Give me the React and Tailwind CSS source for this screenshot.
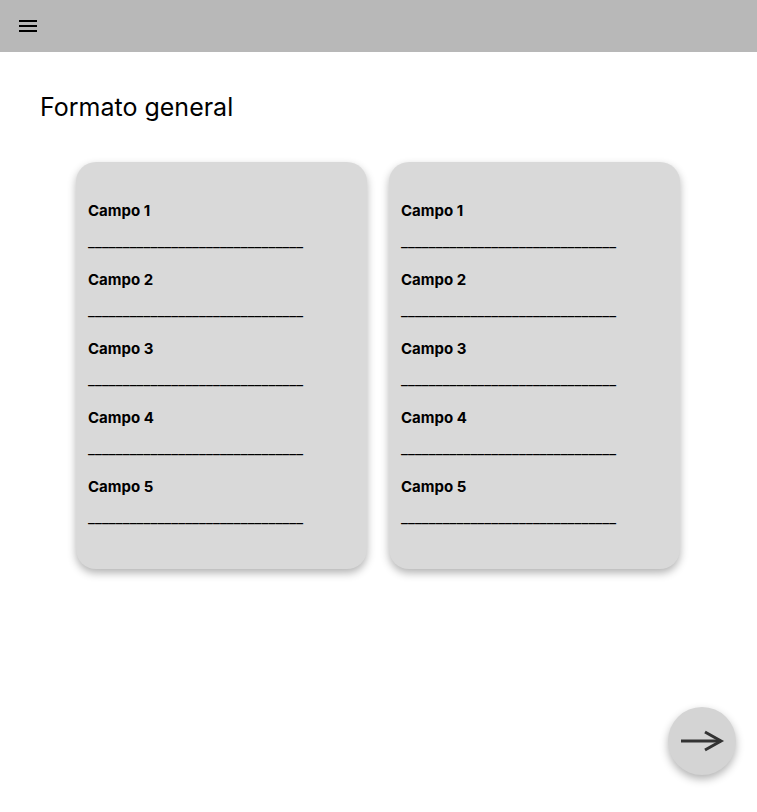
const CAMPOS = ["Campo 1", "Campo 2", "Campo 3", "Campo 4", "Campo 5"];

function Card() {
  return (
    <div className="w-[291px] h-[407px] rounded-[20px] bg-[#d9d9d9] shadow-[0_4px_8px_rgba(0,0,0,0.3)] pl-3 pt-[39px]">
      {CAMPOS.map((c) => (
        <div key={c} className="h-[69px]">
          <div className="h-5 leading-5 text-[15px] font-bold text-black">{c}</div>
          <div className="mt-[11px] h-5 leading-5 text-[15px] tracking-[0.1px] text-black whitespace-nowrap">
            _______________________________
          </div>
        </div>
      ))}
    </div>
  );
}

export default function App() {
  return (
    <div className="relative min-h-[812px] bg-white font-['Inter',sans-serif]">
      {/* top bar */}
      <div className="h-[52px] bg-[#b8b8b8] flex items-center px-4">
        <svg width="24" height="24" viewBox="0 0 24 24" className="text-black">
          <path d="M3 18h18v-2H3v2zm0-5h18v-2H3v2zm0-7v2h18V6H3z" fill="currentColor" />
        </svg>
      </div>

      <h1 className="mt-[39px] ml-10 text-[25px] leading-8 text-black">Formato general</h1>

      <div className="mt-[39px] flex gap-[22px] pl-[76px]">
        <Card />
        <Card />
      </div>

      {/* floating next button */}
      <button className="fixed right-[21px] bottom-[37px] w-[68px] h-[68px] rounded-full bg-[#d4d4d4] shadow-[0_4px_8px_rgba(0,0,0,0.3)] flex items-center justify-center">
        <svg width="46" height="24" viewBox="0 0 46 24" fill="none" stroke="#333" strokeWidth="3">
          <path d="M2 12h40" />
          <path d="M26 3l16 9-16 9" />
        </svg>
      </button>
    </div>
  );
}
